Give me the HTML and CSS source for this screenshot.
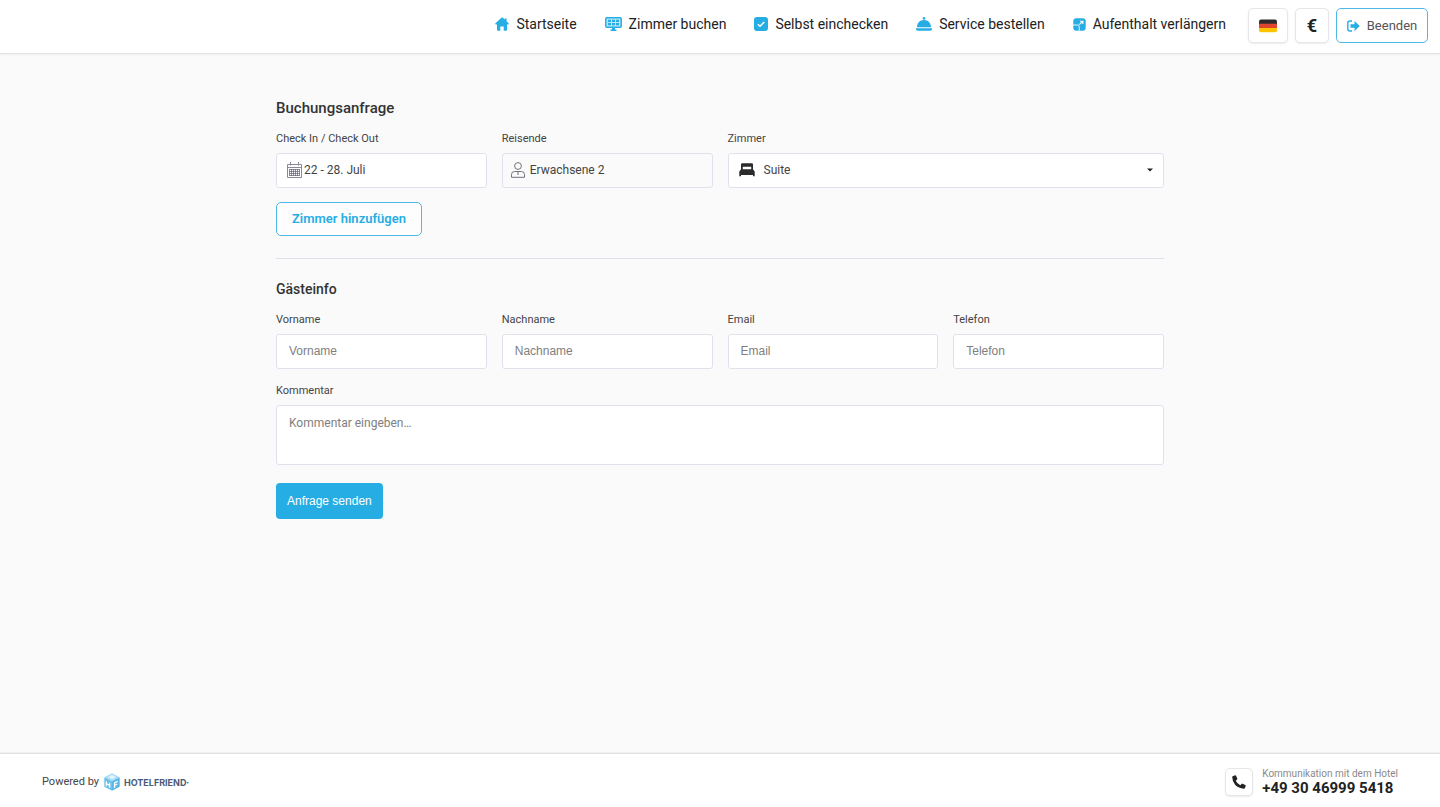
FILE: index.html
```html
<!DOCTYPE html>
<html lang="de">
<head>
<meta charset="utf-8">
<meta name="viewport" content="width=device-width, initial-scale=1">
<title>Buchungsanfrage</title>
<link rel="stylesheet" href="styles.css">
</head>
<body>
<header class="header">
  <nav class="nav">
    <a class="nav-link" href="#">
      <svg width="14" height="14" viewBox="0 0 14 14" fill="currentColor"><path d="M7 0.2 9.800 2.600V1.400h1.800v2.800L13.800 6.600 13.400 7.400H12V12.800Q12 13.800 11 13.800H8.700V9.600H5.300v4.200H3Q2 13.800 2 12.800V7.400H.6L.2 6.600Z"/></svg>
      <span>Startseite</span>
    </a>
    <a class="nav-link" href="#">
      <svg width="17" height="14" viewBox="0 0 17 14"><rect x=".8" y=".8" width="15.400" height="9.400" rx="1" fill="#b9e5f8" stroke="currentColor" stroke-width="1.500"/><path fill="currentColor" d="M3 2.700h3v2.300H3zM7 2.700h3v2.300H7zM11 2.700h3v2.300h-3zM3 6h3v2.300H3zM7 6h3v2.300H7zM11 6h3v2.300h-3zM7 10.500h3v2h1.500V14h-6v-1.500H7z"/></svg>
      <span>Zimmer buchen</span>
    </a>
    <a class="nav-link" href="#">
      <svg width="14" height="14" viewBox="0 0 14 14"><rect width="14" height="14" rx="3" fill="currentColor"/><path d="m3.800 7.200 2.200 2.100 4.300-4.400" fill="none" stroke="#fff" stroke-width="1.500"/></svg>
      <span>Selbst einchecken</span>
    </a>
    <a class="nav-link" href="#">
      <svg width="16" height="14" viewBox="0 0 16 14" fill="currentColor"><circle cx="8" cy="1.400" r="1.300"/><path d="M1 10.200C1 5.800 4 3 8 3s7 2.800 7 7.200ZM0 11.200h16v.8q0 1.700-1.600 1.700H1.600Q0 13.700 0 12Z"/></svg>
      <span>Service bestellen</span>
    </a>
    <a class="nav-link" href="#">
      <svg width="13" height="13" viewBox="0 0 13 13"><rect x=".3" y=".3" width="12.400" height="12.400" rx="3" fill="currentColor"/><path d="M0 7h4.500q1.700 0 1.700 1.700V13" fill="none" stroke="#fff" stroke-width=".9"/><path d="m6.300 6.700 3.300-3.300M7 3.200h2.900v2.900" fill="none" stroke="#fff" stroke-width="1.100"/></svg>
      <span>Aufenthalt verlängern</span>
    </a>
  </nav>
  <div class="tools">
    <button class="tool tool-flag" type="button" aria-label="Deutsch">
      <svg width="18" height="14" viewBox="0 0 18 14"><path fill="#2b2b2b" d="M0 5V2.500Q0 .5 2 .5h14q2 0 2 2V5z"/><path fill="#e0452f" d="M0 4.700h18v4.300H0z"/><path fill="#ffc400" d="M0 9h18v2.300q0 2-2 2H2q-2 0-2-2z"/></svg>
    </button>
    <button class="tool tool-currency" type="button">€</button>
    <button class="tool tool-exit" type="button">
      <svg width="13" height="12" viewBox="0 0 13 12"><path d="M5 1H3Q.8 1 .8 3v6Q.8 11 3 11h2" fill="none" stroke="currentColor" stroke-width="1.400"/><path fill="currentColor" d="M3.500 4.300H7.500V1L12.800 6 7.500 11V7.700H3.500z"/></svg>
      <span>Beenden</span>
    </button>
  </div>
</header>

<main class="main">
  <form class="form">
    <h1 class="title">Buchungsanfrage</h1>
    <div class="grid">
      <div class="field">
        <label class="label" for="dates">Check In / Check Out</label>
        <div class="control">
          <svg width="15" height="16" viewBox="0 0 15 16" fill="none" stroke="#625f72"><path d="M.5 2.500h14v13H.5zM.5 5.500h14" stroke="#8c889c"/><path d="M3.500 0v3.500M11.500 0v3.500" stroke="#8c889c"/><path d="M2.500 7.500h10M2.500 9.500h10M2.500 11.500h10M2.500 13.500h10M2.500 7v7M4.500 7v7M6.500 7v7M8.500 7v7M10.500 7v7M12.500 7v7" stroke-width=".7"/></svg>
          <input class="control-input" id="dates" type="text" value="22 - 28. Juli">
        </div>
      </div>
      <div class="field">
        <label class="label" for="guests">Reisende</label>
        <button class="control control-guests" id="guests" type="button">
          <svg width="14" height="16" viewBox="0 0 14 16" fill="none" stroke="#76717b"><circle cx="7" cy="4" r="3.400"/><path d="M.5 15.300V12.500Q.5 9.500 3.500 9.500h7q3 0 3 3v2.800zM7 9.500v3.500"/></svg>
          <span>Erwachsene 2</span>
        </button>
      </div>
      <div class="field field-wide">
        <label class="label" for="room">Zimmer</label>
        <div class="control control-room">
          <svg width="16" height="14" viewBox="0 0 16 14" fill="#2b2b2b"><path d="M2 6.500V1.500Q2 .3 3.200.3h9.600Q14 .3 14 1.500v5h-1.800V3.700H3.800v2.800zM2 6.300h12l1.700 2.200V13.300H14V12H2v1.300H.3V8.500z"/></svg>
          <select class="room-select" id="room"><option>Suite</option></select>
          <svg class="caret" width="6" height="4" viewBox="0 0 6 4"><path d="M0 .5h6L3 3.500z" fill="#222"/></svg>
        </div>
      </div>
    </div>
    <button class="add-room" type="button">Zimmer hinzufügen</button>
    <hr class="divider">
    <h2 class="subtitle">Gästeinfo</h2>
    <div class="grid">
      <div class="field"><label class="label" for="first">Vorname</label><input class="input" id="first" type="text" placeholder="Vorname"></div>
      <div class="field"><label class="label" for="last">Nachname</label><input class="input" id="last" type="text" placeholder="Nachname"></div>
      <div class="field"><label class="label" for="email">Email</label><input class="input" id="email" type="email" placeholder="Email"></div>
      <div class="field"><label class="label" for="phone">Telefon</label><input class="input" id="phone" type="tel" placeholder="Telefon"></div>
    </div>
    <div class="field field-comment">
      <label class="label" for="comment">Kommentar</label>
      <textarea class="input textarea" id="comment" placeholder="Kommentar eingeben…"></textarea>
    </div>
    <button class="submit" type="submit">Anfrage senden</button>
  </form>
</main>

<footer class="footer">
  <a class="brand" href="#">
    <span>Powered by</span>
    <svg class="brand-mark" width="16" height="18" viewBox="0 0 16 18"><path fill="#a9dcf5" d="m8 .3 7.700 3.900L8 8.300.3 4.200z"/><path fill="#6bbfe9" d="M.3 4.200 8 8.300v9.400L.3 13.700z"/><path fill="#58b5e5" d="M15.700 4.200 8 8.300v9.400l7.700-4z"/><path fill="#e2f4fd" d="m8 2 4 2.100L8 6.200 4 4.100z"/><path d="M2.300 8.200v5M5.700 9.800v5M2.300 10.700l3.400 1.600M10.500 15V9.900l3.200-1.600M10.500 12.500l2.700-1.300" fill="none" stroke="#fff" stroke-width="1.300"/></svg>
    <span class="brand-name">HOTELFRIEND<span class="brand-dot">•</span></span>
  </a>
  <div class="contact">
    <button class="tool tool-phone" type="button" aria-label="Anrufen">
      <svg width="14" height="14" viewBox="0 0 14 14" fill="#222"><path d="M.8 1.300 3 .3q.7-.2 1 .4l1.300 2.800q.2.600-.3 1.100L3.800 5.700q1.300 3 4.500 4.500l1.200-1.300q.5-.500 1-.2l2.800 1.300q.6.300.4 1l-.8 2q-.2.700-1 .7Q6.500 13.300 3.300 10 .3 6.700.200 2.100.200 1.500.8 1.300z"/></svg>
    </button>
    <div>
      <div class="contact-label">Kommunikation mit dem Hotel</div>
      <a class="contact-phone" href="tel:+4930469995418">+49 30 46999 5418</a>
    </div>
  </div>
</footer>
</body>
</html>
```
FILE: styles.css
```css
* {
  box-sizing: border-box;
}

body {
  margin: 0;
  min-height: 100vh;
  display: flex;
  flex-direction: column;
  background: #fafafa;
  color: #444;
  font: 12px/16px Roboto, sans-serif;
}

button,
input,
select,
textarea {
  font: inherit;
  color: inherit;
}

a {
  color: inherit;
  text-decoration: none;
}

svg {
  flex: none;
}

.header {
  display: flex;
  justify-content: flex-end;
  gap: 22px;
  padding: 8px 12px 10px;
  background: #fff;
  border-bottom: 1px solid #e2e2e2;
  box-shadow: 0 1px 2px #f0f0f0;
}

.nav {
  display: flex;
  gap: 28px;
  padding-top: 6px;
}

.nav-link {
  display: flex;
  align-items: center;
  gap: 7px;
  height: 20px;
  color: #222;
  font-size: 14px;
  font-weight: 450;
}

.nav-link svg {
  color: #26ade4;
}

.tools {
  display: flex;
  gap: 7px;
}

.tool {
  display: flex;
  align-items: center;
  justify-content: center;
  height: 35px;
  padding: 0;
  background: #fff;
  border: 1px solid #e6e6ea;
  border-radius: 5px;
  box-shadow: 0 1px 2px #ececec;
}

.tool-flag {
  width: 40px;
}

.tool-currency {
  width: 34px;
  color: #222;
  font-size: 18px;
  font-weight: 700;
}

.tool-exit {
  gap: 7px;
  width: 92px;
  color: #555;
  font-size: 13px;
  border-color: #4db9e8;
  box-shadow: none;
}

.tool-exit svg {
  color: #26ade4;
}

.main {
  flex: 1;
  padding: 44px 24px;
}

.form {
  max-width: 888px;
  margin: 0 auto;
}

.title,
.subtitle {
  margin: 0;
  color: #333;
  font-size: 15px;
  font-weight: 500;
  line-height: 20px;
}

.subtitle {
  font-size: 14px;
}

.grid {
  display: grid;
  grid-template-columns: repeat(4, 1fr);
  gap: 15px;
  margin-top: 13px;
}

.field {
  min-width: 0;
}

.field-wide {
  grid-column: span 2;
}

.field-comment {
  margin-top: 14px;
}

.label {
  display: block;
  margin-bottom: 6px;
  font-size: 11px;
}

.control,
.input {
  display: flex;
  align-items: center;
  width: 100%;
  height: 35px;
  background: #fff;
  border: 1px solid #dfe2ec;
  border-radius: 3px;
}

.control {
  gap: 2px;
  padding: 0 10px 1px;
  font-size: 12px;
}

.control-input {
  flex: 1;
  min-width: 0;
  padding: 0;
  background: none;
  border: 0;
}

.control-guests {
  gap: 5px;
  padding: 0 8px 1px;
  background: #fafafa;
}

.control-room {
  gap: 5px;
}

.room-select {
  flex: 1;
  padding: 0 4px;
  appearance: none;
  background: none;
  border: 0;
}

.input {
  padding: 0 12px 1px;
  font: 12px/16px "Liberation Sans", sans-serif;
}

.input::placeholder {
  color: #808080;
}

.textarea {
  display: block;
  height: 60px;
  padding: 9px 12px;
  resize: none;
  font-family: Roboto, sans-serif;
}

.add-room {
  display: block;
  height: 34px;
  margin-top: 14px;
  padding: 0 15px;
  background: #fdfdfd;
  border: 1px solid #4db9e8;
  border-radius: 5px;
  color: #26ade4;
  font-size: 13px;
  font-weight: 600;
}

.divider {
  margin: 22px 0 20px;
  border: 0;
  border-top: 1px solid #dcdfe9;
}

.submit {
  height: 36px;
  margin-top: 18px;
  padding: 0 11px;
  background: #26ade4;
  border: 0;
  border-radius: 4px;
  color: #fff;
  font: 12px "Liberation Sans", sans-serif;
}

.footer {
  display: flex;
  align-items: center;
  justify-content: space-between;
  min-height: 54px;
  padding: 3px 42px 0;
  background: #fff;
  border-top: 1px solid #e2e2e2;
  box-shadow: 0 -1px 1px #f0f0f0;
}

.brand {
  display: flex;
  align-items: center;
  font-size: 11px;
}

.brand-mark {
  margin: 0 4px 0 5px;
}

.brand-name {
  color: #4a5a78;
  font: 700 9px/16px Inter, sans-serif;
}

.brand-dot {
  font-size: 5px;
  vertical-align: 2px;
}

.contact {
  display: flex;
  align-items: center;
  gap: 9px;
}

.tool-phone {
  width: 28px;
  height: 28px;
}

.contact-label {
  color: #8a8a8a;
  font-size: 10px;
  line-height: 12px;
}

.contact-phone {
  display: block;
  color: #222;
  font-size: 15px;
  font-weight: 700;
  line-height: 16px;
}
```
